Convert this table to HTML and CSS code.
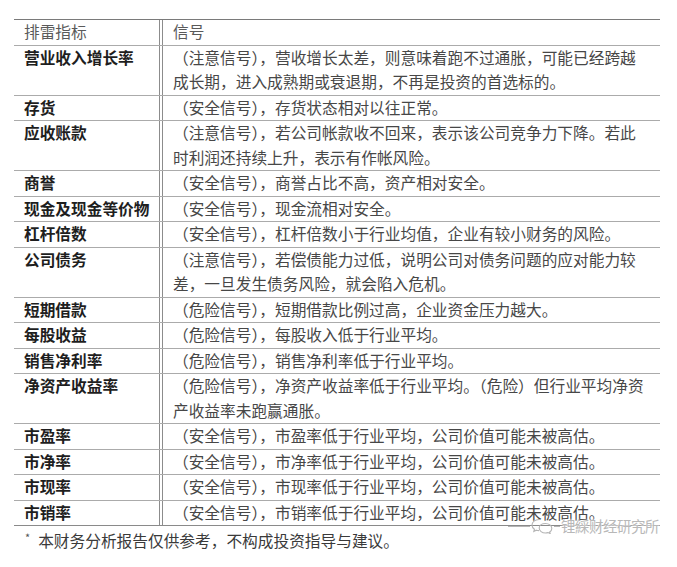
FILE: index.html
```html
<!DOCTYPE html>
<html lang="zh-CN">
<head>
<meta charset="utf-8">
<title>排雷指标</title>
<link rel="stylesheet" href="styles.css">
</head>
<body>
<div class="page">
  <div class="table">
    <div class="row head"><div class="k">排雷指标</div><div class="v">信号</div></div>
    <div class="row"><div class="k">营业收入增长率</div><div class="v">（注意信号），营收增长太差，则意味着跑不过通胀，可能已经跨越成长期，进入成熟期或衰退期，不再是投资的首选标的。</div></div>
    <div class="row"><div class="k">存货</div><div class="v">（安全信号），存货状态相对以往正常。</div></div>
    <div class="row"><div class="k">应收账款</div><div class="v">（注意信号），若公司帐款收不回来，表示该公司竞争力下降。若此时利润还持续上升，表示有作帐风险。</div></div>
    <div class="row"><div class="k">商誉</div><div class="v">（安全信号），商誉占比不高，资产相对安全。</div></div>
    <div class="row"><div class="k">现金及现金等价物</div><div class="v">（安全信号），现金流相对安全。</div></div>
    <div class="row"><div class="k">杠杆倍数</div><div class="v">（安全信号），杠杆倍数小于行业均值，企业有较小财务的风险。</div></div>
    <div class="row"><div class="k">公司债务</div><div class="v">（注意信号），若偿债能力过低，说明公司对债务问题的应对能力较差，一旦发生债务风险，就会陷入危机。</div></div>
    <div class="row"><div class="k">短期借款</div><div class="v">（危险信号），短期借款比例过高，企业资金压力越大。</div></div>
    <div class="row"><div class="k">每股收益</div><div class="v">（危险信号），每股收入低于行业平均。</div></div>
    <div class="row"><div class="k">销售净利率</div><div class="v">（危险信号），销售净利率低于行业平均。</div></div>
    <div class="row"><div class="k">净资产收益率</div><div class="v">（危险信号），净资产收益率低于行业平均。（危险）但行业平均净资产收益率未跑赢通胀。</div></div>
    <div class="row"><div class="k">市盈率</div><div class="v">（安全信号），市盈率低于行业平均，公司价值可能未被高估。</div></div>
    <div class="row"><div class="k">市净率</div><div class="v">（安全信号），市净率低于行业平均，公司价值可能未被高估。</div></div>
    <div class="row"><div class="k">市现率</div><div class="v">（安全信号），市现率低于行业平均，公司价值可能未被高估。</div></div>
    <div class="row last"><div class="k">市销率</div><div class="v">（安全信号），市销率低于行业平均，公司价值可能未被高估。</div></div>
  </div>
  <p class="note"><span class="star">*</span>本财务分析报告仅供参考，不构成投资指导与建议。</p>
  <div class="watermark">
    <span class="dash"></span>
    <svg class="wx" width="22" height="16" viewBox="0 0 22 16" aria-hidden="true">
      <path d="M8 1.5c-3.9 0-7 2.5-7 5.6 0 1.7 0.9 3.2 2.4 4.2l-0.6 2.2 2.5-1.3c0.9 0.3 1.8 0.4 2.7 0.4" fill="none" stroke="#b5b5b5" stroke-width="1.1"/>
      <path d="M14.5 5.5c3.5 0 6.3 2.2 6.3 4.9 0 1.4-0.8 2.7-2.1 3.6l0.5 1.7-2.1-1.1c-0.8 0.2-1.6 0.4-2.6 0.4-3.5 0-6.3-2.2-6.3-4.9s2.8-4.6 6.3-4.6z" fill="none" stroke="#b5b5b5" stroke-width="1.1"/>
    </svg>
    <span class="dash short"></span>
    <span class="wm-text">锂綵财经研究所</span>
  </div>
</div>
</body>
</html>
```
FILE: styles.css
```css
html, body {
  margin: 0;
  padding: 0;
  background: #ffffff;
}
.page {
  position: relative;
  width: 646px;
  margin-left: 14px;
  padding-top: 19px;
  font-family: "Noto Sans CJK SC", "Noto Sans", sans-serif;
  font-size: 15.7px;
}
.table {
  border-top: 1px solid #7a7a7a;
}
.row {
  display: grid;
  grid-template-columns: 146px 1fr;
  column-gap: 2px;
  border-bottom: 1px solid #ababab;
  line-height: 24.5px;
}
.row.last {
  border-bottom-color: #8a8a8a;
}
.k {
  padding-left: 10px;
  border-right: 1px solid #8c8c8c;
  font-weight: 700;
  color: #1e1e1e;
}
.v {
  padding: 0 12px 0 10px;
  border-left: 1px solid #8c8c8c;
  color: #474747;
}
.head .k,
.head .v {
  font-weight: 400;
  color: #5a5a5a;
}
.note {
  margin: 0;
  padding: 0 0 0 11px;
  line-height: 22px;
  color: #3a3a3a;
}
.star {
  display: inline-block;
  font-size: 11px;
  vertical-align: 5px;
  margin-right: 8px;
  color: #555;
}
.watermark {
  position: absolute;
  left: 494px;
  top: 517px;
  display: flex;
  align-items: center;
  gap: 1px;
  white-space: nowrap;
  width: max-content;
  color: #b0b0b0;
}
.dash {
  display: inline-block;
  width: 22px;
  height: 1px;
  background: #b5b5b5;
}
.dash.short {
  width: 6px;
}
.wm-text {
  font-size: 14.5px;
  line-height: 18px;
  letter-spacing: -0.5px;
  color: #b8b8b8;
  text-shadow: 0 0 2px #fff, 0 0 2px #fff;
}
```
